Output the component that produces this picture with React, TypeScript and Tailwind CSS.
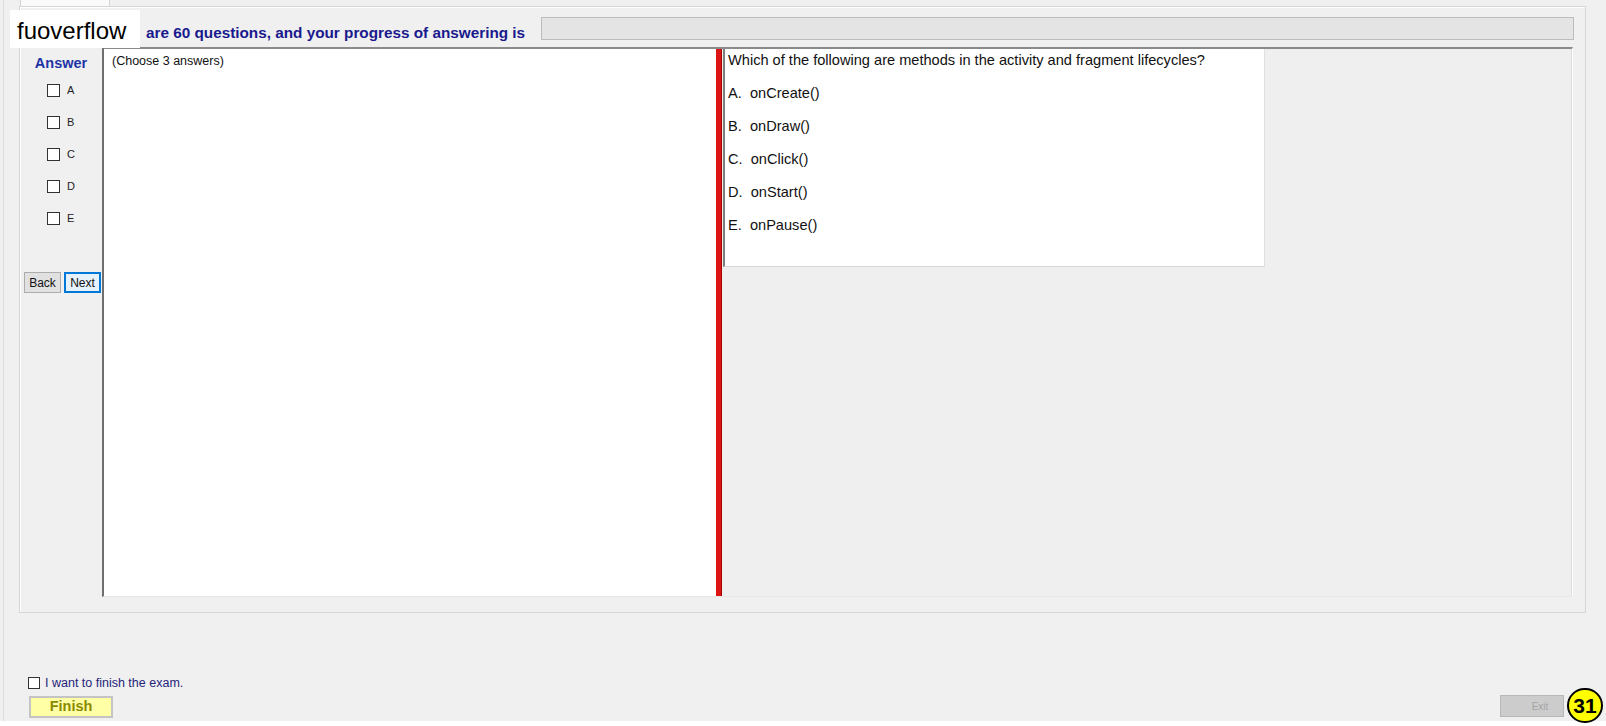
import React from "react";

const options = [
  { k: "A", t: "onCreate()" },
  { k: "B", t: "onDraw()" },
  { k: "C", t: "onClick()" },
  { k: "D", t: "onStart()" },
  { k: "E", t: "onPause()" },
];

export default function App() {
  return (
    <div className="relative w-[1606px] h-[726px] overflow-hidden bg-[#f0f0f0] font-['Liberation_Sans',Arial,sans-serif] text-black">
      <div className="ml-[3px] flex h-[721px] flex-col border-l border-[#dcdcdc]">
        {/* tab strip */}
        <div className="flex h-[6px] pl-[16px]">
          <div className="h-full w-[90px] border-x border-[#d4d4d4] bg-[#fafafa]" />
        </div>

        {/* main panel */}
        <div className="ml-[15px] flex h-[607px] w-[1567px] flex-col border border-[#d6d6d6] shadow-[inset_1px_1px_0_#ffffff]">
          {/* header */}
          <div className="flex pl-[126px] pr-[11px] pt-[10px]">
            <div className="h-[23px] whitespace-nowrap text-[15.3px] font-bold leading-[31px] text-[#1a1a8e]">
              are 60 questions, and your progress of answering is
            </div>
            <div className="ml-[16px] h-[23px] flex-1 border border-[#bdbdbd] bg-[#e4e4e4]" />
          </div>

          {/* content row */}
          <div className="mt-[7px] flex h-[550px] pr-[12px]">
            {/* answer column */}
            <div className="flex w-[82px] flex-col">
              <div className="pt-[8px] text-center text-[14.5px] font-bold leading-[16px] text-[#1f33a6]">
                Answer
              </div>
              <div className="mt-[3px] flex flex-col">
                {options.map((o) => (
                  <div key={o.k} className="flex h-[32px] items-center gap-[7px] pl-[27px]">
                    <div className="h-[13px] w-[13px] border border-[#333333] bg-white" />
                    <span className="text-[11px] leading-none text-[#222]">{o.k}</span>
                  </div>
                ))}
              </div>
              <div className="mt-[38px] flex gap-[3px] pl-[4px]">
                <div className="flex h-[21px] w-[37px] items-center justify-center border border-[#adadad] bg-[#e1e1e1] text-[12px] text-[#111]">
                  Back
                </div>
                <div className="flex h-[21px] w-[37px] items-center justify-center border-2 border-[#0078d7] bg-[#e5f1fb] text-[12px] text-[#111]">
                  Next
                </div>
              </div>
            </div>

            {/* split container */}
            <div className="flex flex-1 border-l-2 border-t-2 border-b border-r border-l-[#6f6f6f] border-t-[#8a8a8a] border-b-[#e6e6e6] border-r-[#ffffff]">
              <div className="w-[612px] bg-white pl-[8px] pt-[5px]">
                <div className="text-[12.5px] leading-[14px] text-[#111]">(Choose 3 answers)</div>
              </div>
              <div className="w-[6px] bg-[#dc1414] border-r border-[#a00000]" />
              <div className="flex-1 bg-[#efefef] border-r border-[#dcdcdc]">
                <div className="ml-[1px] h-[218px] w-[542px] border-l-2 border-b border-r border-l-[#7f7f7f] border-b-[#d8d8d8] border-r-[#e0e0e0] bg-white pl-[3px] pt-[1px] text-[14.6px] text-[#111]">
                  <div className="leading-[20px]">
                    Which of the following are methods in the activity and fragment lifecycles?
                  </div>
                  {options.map((o) => (
                    <div key={o.k} className="mt-[13px] whitespace-pre leading-[20px]">
                      {o.k}.{"  "}
                      {o.t}
                    </div>
                  ))}
                </div>
              </div>
            </div>
          </div>
        </div>

        {/* bottom area */}
        <div className="flex flex-1 items-end justify-between pb-[3px] pl-[24px] pr-[42px]">
          <div className="flex flex-col">
            <div className="flex h-[14px] items-center gap-[5px]">
              <div className="h-[12px] w-[12px] border border-[#333333] bg-white" />
              <span className="text-[12.5px] leading-none text-[#25257a]">I want to finish the exam.</span>
            </div>
            <div className="ml-[1px] mt-[6px] flex h-[22px] w-[84px] items-center justify-center border-2 border-[#c4c4c4] bg-[#ffffa6] text-[14.5px] font-bold text-[#8a8a00]">
              Finish
            </div>
          </div>
          <div className="mb-[1px] flex h-[22px] w-[64px] items-center justify-center border border-[#b8b8b8] bg-[#cccccc] pl-[16px] text-[10px] text-[#a4a4a4]">
            Exit
          </div>
        </div>
      </div>
      <div className="h-[5px] bg-white" />

      {/* watermark */}
      <div className="absolute left-[10px] top-[10px] h-[38px] w-[130px] bg-white pl-[7px] text-[24px] leading-[42px] text-black">
        fuoverflow
      </div>

      {/* badge */}
      <div className="absolute left-[1567px] top-[688px] flex h-[35px] w-[36px] items-center justify-center rounded-full border-2 border-black bg-[#ffff00] text-[21px] font-bold leading-none text-black">
        31
      </div>
    </div>
  );
}
